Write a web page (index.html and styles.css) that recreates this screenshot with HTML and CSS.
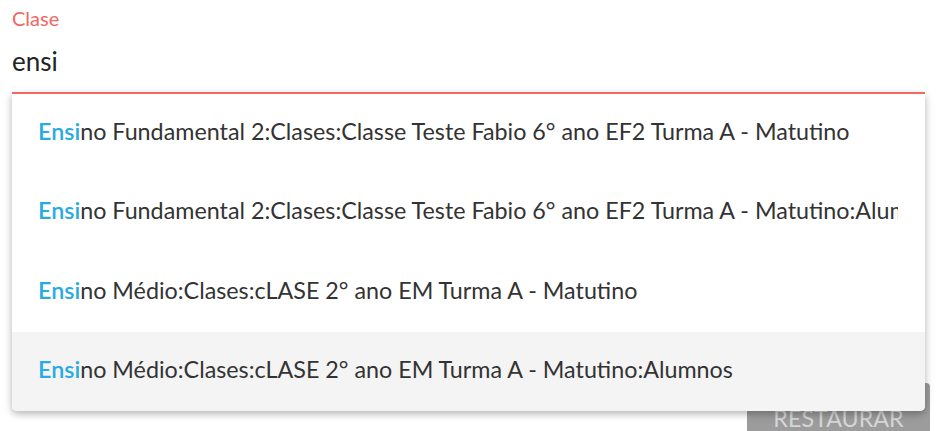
FILE: index.html
```html
<!DOCTYPE html>
<html lang="pt">
<head>
  <meta charset="UTF-8">
  <meta name="viewport" content="width=device-width, initial-scale=1.0">
  <title>Clase</title>
  <link rel="stylesheet" href="styles.css">
</head>
<body>
  <div class="page">
    <div class="field">
      <label class="field-label" for="clase">Clase</label>
      <input class="field-input" id="clase" type="text" value="ensi">
      <ul class="suggestions">
        <li class="option"><span class="option-text"><span class="match">Ensi</span>no Fundamental 2:Clases:Classe Teste Fabio 6° ano EF2 Turma A - Matutino</span></li>
        <li class="option"><span class="option-text"><span class="match">Ensi</span>no Fundamental 2:Clases:Classe Teste Fabio 6° ano EF2 Turma A - Matutino:Alumnos</span></li>
        <li class="option"><span class="option-text"><span class="match">Ensi</span>no Médio:Clases:cLASE 2° ano EM Turma A - Matutino</span></li>
        <li class="option active"><span class="option-text"><span class="match">Ensi</span>no Médio:Clases:cLASE 2° ano EM Turma A - Matutino:Alumnos</span></li>
      </ul>
    </div>

    <div class="actions">
      <button class="btn">Restaurar</button>
    </div>
  </div>
</body>
</html>
```

FILE: styles.css
```css
body {
  margin: 0;
  font-family: Lato, 'Open Sans', sans-serif;
  background-color: #fff;
  color: #333;
}
.page {
  padding: 6px 10px 0 12px;
}
.field {
  position: relative;
  margin-right: 5px;
}
.field-label {
  display: block;
  font-size: 20px;
  line-height: 24px;
  color: #f0675d;
}
.field-input {
  position: relative;
  z-index: 3;
  display: block;
  width: 100%;
  box-sizing: border-box;
  margin-top: 14px;
  padding: 0 0 14px;
  border: none;
  border-bottom: 2px solid #ef6a62;
  font-family: inherit;
  font-size: 26px;
  line-height: 34px;
  color: #222;
  outline: none;
  background: transparent;
}
.suggestions {
  position: absolute;
  top: calc(100% - 1px);
  left: 0;
  right: 0;
  margin: 0;
  padding: 0;
  list-style: none;
  background-color: #fff;
  border-radius: 0 0 5px 5px;
  box-shadow: 0 3px 6px rgba(0,0,0,0.2), 0 2px 12px rgba(0,0,0,0.12);
  overflow: hidden;
  z-index: 2;
}
.option {
  height: 79.5px;
  box-sizing: border-box;
  padding: 23.5px 27px 0 26px;
  font-size: 23.3px;
  line-height: 28px;
  color: #333;
}
.option-text {
  display: block;
  white-space: nowrap;
  overflow: hidden;
}
.option.active {
  background-color: #f4f4f4;
}
.match {
  color: #29abe2;
  font-weight: 600;
}
.actions {
  display: flex;
  justify-content: flex-end;
  margin-top: 289px;
}
.btn {
  width: 183px;
  height: 60px;
  box-sizing: border-box;
  border: none;
  border-radius: 4px;
  background-color: #9c9c9c;
  color: #d6d6d6;
  font-family: inherit;
  font-size: 23.3px;
  line-height: 28px;
  text-transform: uppercase;
  padding: 10px 0 0;
  align-self: flex-start;
}
```
